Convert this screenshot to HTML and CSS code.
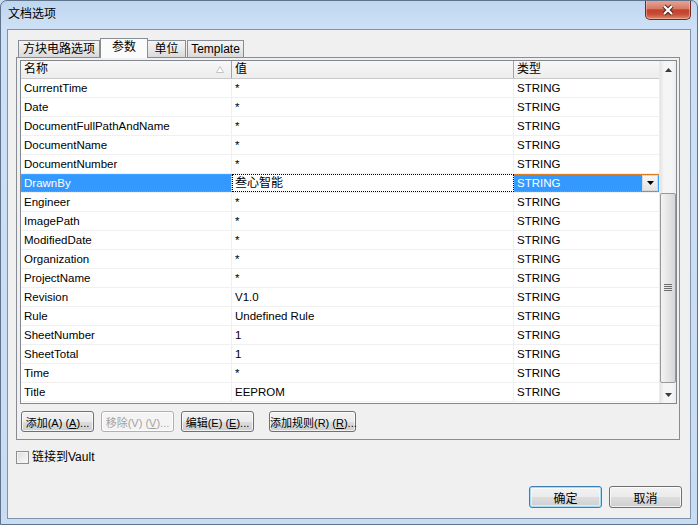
FILE: index.html
```html
<!DOCTYPE html>
<html lang="zh-CN">
  <head>
    <meta charset="UTF-8" />
    <title>文档选项</title>
    <link rel="stylesheet" href="styles.css">
  </head>
  <body>
    <div class="window">
      <div class="titlebar">
        <span class="title">文档选项</span>
        <button class="close" aria-label="关闭">
          <svg width="14" height="12" viewBox="0 0 14 12">
            <path d="M3 2 L11 10 M11 2 L3 10" stroke="#4a2522" stroke-width="4.2" />
            <path d="M3 2 L11 10 M11 2 L3 10" stroke="#fff" stroke-width="2.2" />
          </svg>
        </button>
      </div>

      <div class="client">
        <div class="tabs">
          <div class="tab tab-circuit">方块电路选项</div>
          <div class="tab tab-active">参数</div>
          <div class="tab tab-units">单位</div>
          <div class="tab tab-template">Template</div>
        </div>

        <div class="panel">
          <div class="grid">
            <div class="table">
              <div class="head">
                <div class="hcell">
                  名称
                  <svg class="sort" width="8" height="7" viewBox="0 0 8 7">
                    <path d="M4 0.5 L7.5 6.5 H0.5 Z" fill="#fff" stroke="#c2c2c2" />
                  </svg>
                </div>
                <div class="hcell">值</div>
                <div class="hcell">类型</div>
              </div>
              <div class="row"><span class="cell">CurrentTime</span><span class="cell">*</span><span class="cell">STRING</span></div>
              <div class="row"><span class="cell">Date</span><span class="cell">*</span><span class="cell">STRING</span></div>
              <div class="row"><span class="cell">DocumentFullPathAndName</span><span class="cell">*</span><span class="cell">STRING</span></div>
              <div class="row"><span class="cell">DocumentName</span><span class="cell">*</span><span class="cell">STRING</span></div>
              <div class="row"><span class="cell">DocumentNumber</span><span class="cell">*</span><span class="cell">STRING</span></div>
              <div class="row">
                <span class="cell cell-hl">DrawnBy</span>
                <span class="cell cell-edit">叁心智能</span>
                <span class="cell cell-hl cell-combo">
                  STRING
                  <span class="dropdown">
                    <svg width="7" height="4" viewBox="0 0 7 4"><path d="M0 0 H7 L3.5 4 Z" fill="#000" /></svg>
                  </span>
                </span>
              </div>
              <div class="row"><span class="cell">Engineer</span><span class="cell">*</span><span class="cell">STRING</span></div>
              <div class="row"><span class="cell">ImagePath</span><span class="cell">*</span><span class="cell">STRING</span></div>
              <div class="row"><span class="cell">ModifiedDate</span><span class="cell">*</span><span class="cell">STRING</span></div>
              <div class="row"><span class="cell">Organization</span><span class="cell">*</span><span class="cell">STRING</span></div>
              <div class="row"><span class="cell">ProjectName</span><span class="cell">*</span><span class="cell">STRING</span></div>
              <div class="row"><span class="cell">Revision</span><span class="cell">V1.0</span><span class="cell">STRING</span></div>
              <div class="row"><span class="cell">Rule</span><span class="cell">Undefined Rule</span><span class="cell">STRING</span></div>
              <div class="row"><span class="cell">SheetNumber</span><span class="cell">1</span><span class="cell">STRING</span></div>
              <div class="row"><span class="cell">SheetTotal</span><span class="cell">1</span><span class="cell">STRING</span></div>
              <div class="row"><span class="cell">Time</span><span class="cell">*</span><span class="cell">STRING</span></div>
              <div class="row"><span class="cell">Title</span><span class="cell">EEPROM</span><span class="cell">STRING</span></div>
            </div>
            <div class="scrollbar">
              <div class="sb-btn">
                <svg width="7" height="4" viewBox="0 0 7 4"><path d="M3.5 0 L7 4 H0 Z" fill="#3c3c3c" /></svg>
              </div>
              <div class="sb-track">
                <div class="sb-thumb">
                  <svg width="8" height="8" viewBox="0 0 8 8">
                    <path d="M0 0.5 H8 M0 2.5 H8 M0 4.5 H8 M0 6.5 H8" stroke="#6d6d6d" />
                  </svg>
                </div>
              </div>
              <div class="sb-btn">
                <svg width="7" height="4" viewBox="0 0 7 4"><path d="M0 0 H7 L3.5 4 Z" fill="#3c3c3c" /></svg>
              </div>
            </div>
          </div>

          <div class="actions">
            <button class="btn">添加(A) (<u>A</u>)...</button>
            <button class="btn" disabled>移除(V) (<u>V</u>)...</button>
            <button class="btn">编辑(E) (<u>E</u>)...</button>
            <button class="btn btn-wide">添加规则(R) (<u>R</u>)...</button>
          </div>
        </div>

        <label class="vault"><span class="checkbox"></span>链接到Vault</label>

        <div class="footer">
          <button class="btn btn-default">确定</button>
          <button class="btn">取消</button>
        </div>
      </div>
    </div>
  </body>
</html>
```

FILE: styles.css
```css
* {
  box-sizing: border-box;
}
html,
body {
  margin: 0;
  padding: 0;
}
body {
  font-family: "Liberation Sans", "Noto Sans CJK SC", sans-serif;
  font-size: 12px;
  color: #000;
  background: #c7dbf1;
}
.window {
  width: 698px;
  height: 525px;
  display: flex;
  flex-direction: column;
  border: 1px solid #5f738c;
  border-radius: 7px 7px 0 0;
  background: linear-gradient(to bottom, #bfd6ef 0, #cde0f5 26px, #c8dcf2 100%);
  overflow: hidden;
}
.titlebar {
  flex: none;
  height: 28px;
  display: flex;
  align-items: flex-start;
  justify-content: space-between;
}
.title {
  margin: 5px 0 0 7px;
  line-height: 16px;
}
.close {
  width: 46px;
  height: 20px;
  margin: -1px 6px 0 0;
  padding: 0;
  border: 1px solid #6b2b24;
  border-top: none;
  border-radius: 0 0 5px 5px;
  background: linear-gradient(#e9a897, #d67b66 45%, #c2412c 52%, #c84c36 75%, #de8c70);
  box-shadow: inset 0 0 0 1px rgba(255, 210, 200, 0.45);
  display: flex;
  align-items: center;
  justify-content: center;
}

/* client area */
.client {
  flex: none;
  height: 490px;
  margin: 0 6px;
  border: 1px solid #8093ab;
  background: #f0f0f0;
  display: flex;
  flex-direction: column;
}
.tabs {
  display: flex;
  align-items: flex-end;
  height: 19px;
  margin: 8px 0 0 10px;
  position: relative;
  z-index: 1;
}
.tab {
  height: 17px;
  line-height: 16px;
  border: 1px solid #898c95;
  border-bottom: none;
  background: linear-gradient(#f4f4f4, #e9e9e9 50%, #dadada);
  text-align: center;
  white-space: nowrap;
}
.tab-circuit {
  width: 82px;
}
.tab-active {
  width: 48px;
  height: 20px;
  margin: 0 0 -1px 0;
  line-height: 17px;
  background: #fbfbfb;
}
.tab-units {
  width: 38px;
  border-left: none;
}
.tab-template {
  width: 57px;
  margin-left: 1px;
}
.panel {
  margin: 0 10px 0 8px;
  border: 1px solid #898c95;
  padding: 2px 2px 7px 3px;
  background: #f0f0f0;
}

/* parameter grid */
.grid {
  display: flex;
  height: 344px;
  border: 1px solid #828790;
  background: #fff;
}
.table {
  flex: 1;
  font-size: 11.5px;
}
.head,
.row {
  display: grid;
  grid-template-columns: 211px 282px 1fr;
}
.head {
  height: 18px;
  background: linear-gradient(#f7f7f7, #ededed);
  border-bottom: 1px solid #c9c9c9;
}
.hcell {
  display: flex;
  align-items: center;
  padding-left: 3px;
  font-size: 12px;
  line-height: 17px;
  border-right: 1px solid #a3a3a3;
}
.hcell:last-child {
  border-right: none;
}
.sort {
  margin: 0 7px 0 auto;
}
.row {
  height: 19px;
  border-bottom: 1px solid #f0f0f0;
}
.cell {
  padding-left: 3px;
  line-height: 18px;
  border-right: 1px solid #f0f0f0;
  white-space: nowrap;
  overflow: hidden;
}
.cell:last-child {
  border-right: none;
}
.cell-hl {
  background: #3399ff;
  color: #fff;
  outline: 1px dotted #e8862c;
  outline-offset: -1px;
}
.cell-edit {
  outline: 1px dotted #000;
  outline-offset: -1px;
  font-size: 12px;
}
.cell-combo {
  display: flex;
  align-items: center;
}
.dropdown {
  width: 16px;
  height: 16px;
  margin: 0 1px 0 auto;
  display: flex;
  align-items: center;
  justify-content: center;
  background: linear-gradient(#f6f6f6, #e4e4e4);
  border: 1px solid #d8d8d8;
}
.scrollbar {
  width: 17px;
  display: flex;
  flex-direction: column;
  background: linear-gradient(to right, #e4e4e4, #f5f5f5 25%, #f5f5f5 75%, #ebebeb);
  border-left: 1px solid #eaeaea;
}
.sb-btn {
  height: 17px;
  display: flex;
  align-items: center;
  justify-content: center;
}
.sb-track {
  flex: 1;
}
.sb-thumb {
  height: 190px;
  margin: 115px 0 0 0;
  border: 1px solid #979797;
  border-radius: 2px;
  background: linear-gradient(to right, #f3f3f3, #e6e6e6 50%, #d6d6d6);
  display: flex;
  align-items: center;
  justify-content: center;
}

/* buttons */
.actions {
  display: flex;
  gap: 7px;
  margin-top: 7px;
  padding-left: 1px;
}
.btn {
  width: 73px;
  height: 21px;
  padding: 0;
  font-family: inherit;
  font-size: 11px;
  color: #000;
  white-space: nowrap;
  border: 1px solid #707070;
  border-radius: 3px;
  background: linear-gradient(#f2f2f2, #ebebeb 50%, #dddddd 51%, #cfcfcf);
  box-shadow: inset 0 0 0 1px rgba(255, 255, 255, 0.7);
}
.btn:disabled {
  color: #a3a3a3;
  border-color: #adb2b5;
  background: #f4f4f4;
}
.btn-wide {
  width: 87px;
  margin-left: 8px;
}
.vault {
  display: flex;
  align-items: center;
  gap: 3px;
  height: 13px;
  margin: 11px 0 0 8px;
  line-height: 13px;
}
.checkbox {
  width: 13px;
  height: 13px;
  border: 1px solid #8e8f8f;
  background: linear-gradient(135deg, #dcdcdc, #fbfbfb);
  box-shadow: inset 0 0 0 1px #f3f3f3;
}
.footer {
  margin-top: auto;
  display: flex;
  justify-content: flex-end;
  gap: 7px;
  padding: 0 8px 10px 0;
}
.footer .btn {
  height: 22px;
  font-size: 12px;
}
.btn-default {
  border-color: #3c7fb1;
  box-shadow: inset 0 0 0 1px #a6dbf6, inset 0 0 0 2px rgba(255, 255, 255, 0.5);
}
```
